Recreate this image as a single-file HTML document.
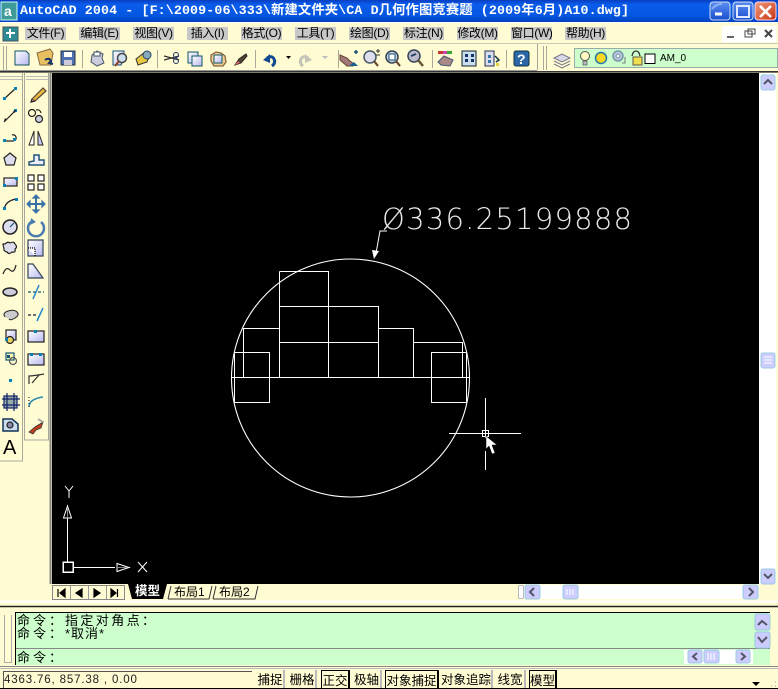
<!DOCTYPE html>
<html><head><meta charset="utf-8">
<style>
html,body{margin:0;padding:0;background:#FFFBD2;}
#r{position:relative;width:778px;height:689px;overflow:hidden;background:#FFFBD2;font-family:"Liberation Sans","Noto Sans CJK SC",sans-serif;}
.a{position:absolute;white-space:pre;}
.m{position:absolute;top:27px;height:13px;width:41px;background:#C8C8C8;font-size:12px;letter-spacing:-.35px;line-height:13px;color:#000;text-align:center;white-space:pre;overflow:hidden;}
.c{position:absolute;font-size:13px;line-height:13px;color:#000;white-space:pre;}
.s{position:absolute;top:670px;height:18px;font-size:12.5px;line-height:20px;text-align:center;color:#000;background:#FFFBD2;border-right:2px solid #bbb;box-sizing:border-box;white-space:pre;overflow:hidden;}
.p{border:1px solid #000;border-bottom:none;border-right:2px solid #000;}
svg{position:absolute;left:0;top:0;}
</style></head><body><div id="r">
<div class="a" style="left:0;top:0;width:778px;height:22px;background:linear-gradient(#0A3FC0,#0A5CEC 20%,#0457E0 70%,#0340C0)"></div>
<div class="a" style="left:20px;top:3px;font-family:'Liberation Mono','Noto Sans CJK SC',monospace;font-weight:bold;font-size:13.33px;letter-spacing:.1px;line-height:17px;color:#fff;">AutoCAD 2004 - [F:\2009-06\333\新建文件夹\CA D几何作图竞赛题 (2009年6月)A10.dwg]</div>
<div class="m" style="left:25px">文件(F)</div><div class="m" style="left:79px">编辑(E)</div><div class="m" style="left:133px">视图(V)</div><div class="m" style="left:187px">插入(I)</div><div class="m" style="left:241px">格式(O)</div><div class="m" style="left:295px">工具(T)</div><div class="m" style="left:349px">绘图(D)</div><div class="m" style="left:403px">标注(N)</div><div class="m" style="left:457px">修改(M)</div><div class="m" style="left:511px">窗口(W)</div><div class="m" style="left:565px">帮助(H)</div>
<div class="a" style="left:722px;top:26px;width:54px;height:16px;background:#fff"></div>
<div class="a" style="left:574px;top:48px;width:204px;height:20px;background:#CCFFCC;box-sizing:border-box;border:1px solid #9aa"></div>
<div class="a" style="left:660px;top:52px;font-size:10px;line-height:13px;color:#000">AM_0</div>
<div class="a" style="left:52px;top:73px;width:707px;height:511px;background:#000"></div>
<div class="a" style="left:759px;top:73px;width:17px;height:511px;background:#fff"></div>
<div class="a" style="left:518px;top:585px;width:241px;height:14px;background:#fff"></div>
<div class="a" style="left:15px;top:612px;width:755px;height:53px;background:#CCFFCC"></div>
<div class="c" style="left:17px;top:614px;letter-spacing:3px">命令：</div><div class="c" style="left:65px;top:614px;letter-spacing:2.4px">指定对角点：</div>
<div class="c" style="left:17px;top:627px;letter-spacing:3px">命令：</div><div class="c" style="left:65px;top:627px;letter-spacing:1px">*取消*</div>
<div class="c" style="left:17px;top:651px;letter-spacing:3px">命令：</div>
<div class="a" style="left:174px;top:585px;font-size:12px;line-height:14px">布局1</div>
<div class="a" style="left:219px;top:585px;font-size:12px;line-height:14px">布局2</div>
<div class="a" style="left:135px;top:584px;font-size:12.5px;line-height:15px;color:#fff;font-weight:bold;z-index:3">模型</div>
<div class="a" style="left:4px;top:674px;font-size:11.500px;line-height:13px;color:#222;letter-spacing:.85px">4363.76, 857.38 , 0.00</div>
<div class="s" style="left:257px;width:28px">捕捉</div><div class="s" style="left:289px;width:28px">栅格</div><div class="s p" style="left:321px;width:29px">正交</div><div class="s" style="left:353px;width:29px">极轴</div><div class="s p" style="left:385px;width:54px">对象捕捉</div><div class="s" style="left:441px;width:52px">对象追踪</div><div class="s" style="left:496px;width:30px">线宽</div><div class="s p" style="left:529px;width:28px">模型</div>
<svg width="778" height="689" viewBox="0 0 778 689" style="z-index:2">
<defs>
<linearGradient id="g" x1="0" y1="0" x2="1" y2="1"><stop offset="0" stop-color="#fff"/><stop offset="1" stop-color="#B8B8F0"/></linearGradient>
<linearGradient id="b" x1="0" y1="0" x2="0" y2="1"><stop offset="0" stop-color="#5C8EF0"/><stop offset="1" stop-color="#1B4FD0"/></linearGradient>
<linearGradient id="x" x1="0" y1="0" x2="1" y2="1"><stop offset="0" stop-color="#F0A080"/><stop offset="1" stop-color="#C83010"/></linearGradient>
</defs>
<!-- title -->
<rect x="1" y="2" width="16" height="18" fill="#3F9A9A" stroke="#CFE" stroke-width="1"/>
<text x="4" y="16" font-family="Liberation Sans" font-size="14" font-weight="bold" fill="#fff">a</text>
<rect x="710" y="2" width="20" height="18" rx="3" fill="url(#b)" stroke="#cde"/><path d="M715 14h7" stroke="#fff" stroke-width="3"/><path d="M712 9q4-5 10-5" stroke="#8fb0f5" stroke-width="2" fill="none"/>
<rect x="733" y="2" width="20" height="18" rx="3" fill="url(#b)" stroke="#cde"/><rect x="737" y="6" width="12" height="11" fill="none" stroke="#dfe8ff" stroke-width="2"/>
<rect x="755" y="2" width="21" height="18" rx="3" fill="url(#x)" stroke="#fde"/><path d="M760 6l11 11M771 6l-11 11" stroke="#fff" stroke-width="2.6"/>
<!-- menu -->
<rect x="3" y="27" width="15" height="14" fill="#2C8C94" stroke="#456"/><path d="M10 29v9M6 33h9" stroke="#fff" stroke-width="2"/><path d="M0 22.5h778" stroke="#fff"/>
<path d="M727 37h7" stroke="#666" stroke-width="2"/><rect x="745" y="31" width="7" height="6" fill="none" stroke="#444"/><rect x="748" y="29" width="7" height="5" fill="none" stroke="#444"/><path d="M765 30l7 7M772 30l-7 7" stroke="#444" stroke-width="2"/>
<path d="M0 43.5h778" stroke="#C8C8B8" stroke-width="1"/>
<!-- toolbar -->
<g stroke="#aaa89a" fill="none"><path d="M3.500 46v24M6.500 46v24M82.500 50v18M157.500 50v18M255.500 50v18M338.500 50v18M432.500 50v18M506.500 50v18M537.500 44v26M543.500 46v24M546.500 46v24"/></g>
<path d="M0 70.500h537" stroke="#999"/><path d="M0 71.800h778" stroke="#333" stroke-width="1.600"/>
<path d="M15 51h11l3 3v11H15z" fill="url(#g)" stroke="#156"/>
<path d="M37 53l13-4 3 4-2 12H40z" fill="#E8C060" stroke="#864"/><path d="M45 60q4-3 6 1l-2 2 4 1" stroke="#136" stroke-width="2" fill="none"/>
<rect x="61" y="51" width="14" height="14" fill="#5070B0" stroke="#234"/><rect x="64" y="52" width="8" height="5" fill="#fff"/><rect x="64" y="60" width="8" height="5" fill="#ccd"/>
<path d="M92 55l5-4 6 3-1 4 2 5-7 3-6-4z" fill="#ccd" stroke="#456"/><rect x="94" y="52" width="6" height="4" fill="#fff" stroke="#456"/>
<path d="M113 51h11v8l-3 6h-8z" fill="url(#g)" stroke="#157"/><circle cx="122" cy="58" r="4.500" fill="#cde" stroke="#444" stroke-width="1.500"/><path d="M119 61l-4 5" stroke="#842" stroke-width="2"/>
<path d="M136 59l9-7 5 3-3 7-9 3z" fill="#E8C840" stroke="#333"/><circle cx="147" cy="55" r="4" fill="#8ab" stroke="#246"/>
<path d="M164 56l15 4M164 60l15-4" stroke="#333" stroke-width="1.200"/><circle cx="176" cy="55" r="2.500" fill="none" stroke="#236"/><circle cx="176" cy="61" r="2.500" fill="none" stroke="#236"/>
<rect x="188" y="52" width="10" height="11" fill="url(#g)" stroke="#156"/><rect x="192" y="56" width="10" height="10" fill="url(#g)" stroke="#156"/>
<path d="M211 55l5-3 5 1 4 3 1 6-3 4h-9l-3-5z" fill="#EED090" stroke="#864" stroke-width="1.300"/><rect x="214" y="55" width="8" height="8" fill="url(#g)" stroke="#156"/>
<path d="M235 65l4-6 7-5 1 2-6 7z" fill="#543" stroke="#222"/><path d="M235 65l3-4 2 2z" fill="#d66"/>
<path d="M272 66q4-3 2-7t-7-1" stroke="#124A90" stroke-width="3" fill="none"/><path d="M263 60l7-6v9z" fill="#124A90"/>
<path d="M286 56h5l-2.500 3z" fill="#000"/>
<path d="M303 66q-4-3-2-7t7-1" stroke="#c4c4b8" stroke-width="3" fill="none"/><path d="M312 60l-7-6v9z" fill="#c4c4b8"/>
<path d="M322 56h6l-3 3z" fill="#bbb"/>
<path d="M340 55l7 3 3 3 4 3-1 2h-6l-7-6z" fill="#A07878" stroke="#643"/><path d="M354 52h4M356 50v4" stroke="#157" stroke-width="1.500"/><path d="M349 66l5-4 4 4z" fill="#1C6090"/>
<circle cx="370" cy="57" r="6" fill="#DDE" stroke="#456" stroke-width="1.500"/><path d="M374 61l4 5" stroke="#643" stroke-width="2.200"/><path d="M376 51h4M378 49v4M376 55h4" stroke="#333"/>
<circle cx="392" cy="57" r="6" fill="#ccd" stroke="#345" stroke-width="1.500"/><path d="M396 61l4 5" stroke="#643" stroke-width="2.200"/><rect x="389" y="54" width="6" height="6" fill="#fff" stroke="#157"/>
<circle cx="414" cy="56" r="6" fill="#bbc" stroke="#345" stroke-width="1.500"/><path d="M418 60l5 6" stroke="#653" stroke-width="2.500"/><path d="M411 56l5-2" stroke="#246" stroke-width="2"/>
<path d="M438 51h14v3h-14z" fill="#c4a"/><path d="M438 51h5v3h-5z" fill="#c33"/><path d="M447 51h5v3h-5z" fill="#3a3"/><path d="M438 62l6-6 9 4-3 6-9-1z" fill="#a88" stroke="#457"/>
<rect x="462" y="51" width="14" height="15" fill="#cde" stroke="#123"/><path d="M465 54h3v3h-3zM471 54h3v3h-3zM465 59h3v3h-3zM471 59h3v3h-3z" fill="#136"/>
<path d="M485 51h9v15h-9z" fill="#DDE" stroke="#235"/><path d="M488 55h3v3h-3zM488 60h3v3h-3z" fill="#37a"/><path d="M495 56l4 4-3 2M498 63v3" stroke="#134" stroke-width="1.500" fill="none"/><rect x="496" y="63" width="3" height="3" fill="#E8D040"/>
<rect x="514" y="51" width="15" height="15" rx="2" fill="#2C68A8" stroke="#134"/><text x="517" y="64" font-family="Liberation Sans" font-size="14" font-weight="bold" fill="#fff">?</text>
<path d="M554 58l8-4 8 4-8 4z" fill="#D8D8E8" stroke="#778"/><path d="M554 61l8 4 8-4M554 64l8 4 8-4" stroke="#778" fill="none"/>
<circle cx="585" cy="56" r="4.500" fill="#FFF8C0" stroke="#555"/><path d="M583 61h4v4h-4z" fill="#bbb" stroke="#555" stroke-width=".7"/>
<circle cx="601" cy="58" r="5.500" fill="#F8D820" stroke="#27A" stroke-width="1.500"/>
<circle cx="618" cy="56" r="5" fill="#BBC8E0" stroke="#79A" stroke-width="1.500"/><circle cx="618" cy="56" r="2" fill="#EEE" stroke="#79A"/><path d="M622 63h3v-6" stroke="#777" fill="none"/>
<path d="M632 56q1-5 4-5t4 5" stroke="#333" stroke-width="1.300" fill="none"/><rect x="633" y="57" width="9" height="8" fill="#F0E050" stroke="#654"/>
<rect x="645" y="54" width="10" height="9.500" fill="#fff" stroke="#000"/>
<!-- left toolbars frame -->
<path d="M22.500 73V461H0M24.500 73V440H48.500V73" stroke="#A8A89C" fill="none"/><path d="M50.500 73V584" stroke="#888" stroke-width="2"/><path d="M0 76.500h22M0 79.500h22M26 76.500h22M26 79.500h22" stroke="#bbb"/>
<g stroke="#222" stroke-width="1.200" fill="none">
<path d="M4 99L16 88"/>
<path d="M4 122L16 110"/>
<path d="M4 141H13q4-1 3-4t-4-2"/>
<path d="M10 153l6 5-2 7H6l-2-7z" fill="#DDE"/>
<rect x="4" y="178" width="13" height="8" fill="url(#g)"/>
<path d="M4 210q1-9 12-11"/>
<circle cx="10" cy="227" r="7" fill="#DDE" stroke-width="1.500"/><path d="M10 227l4-4" stroke="#157"/>
<path d="M5 244q3-3 5-1 4-2 5 1 3 3 0 5 1 4-3 3-3 3-5 0-4-1-3-4-1-2-1-4z" fill="#DDE"/>
<path d="M3 274q3-8 7-4t6-5"/>
<ellipse cx="10" cy="292" rx="7" ry="4" fill="#CCD" stroke-width="1.500"/>
<path d="M5 317q-3-4 3-6t9 1-2 6-6 1" fill="#CCC" stroke-width="1"/>
<rect x="6" y="330" width="10" height="10" fill="url(#g)"/><circle cx="10" cy="340" r="3.500" fill="#E8D060"/>
<rect x="6" y="353" width="8" height="7" fill="#FFF8B0" stroke="#157"/><circle cx="13" cy="361" r="3.500" stroke="#555"/>
<rect x="4" y="396" width="13" height="12" fill="#9AA" stroke="#126"/><path d="M2 399h18M2 405h18M7 393v18M14 393v18" stroke="#126"/>
<path d="M3 419h9l6 5v7H3z" fill="#CDE" stroke="#135" stroke-width="1.500"/><circle cx="10" cy="425" r="3" fill="#88A"/>
<path d="M32 99l11-11 3 3-11 10z" fill="#E8B840" stroke="#543"/><path d="M32 99l-1 3 4-1" fill="#E88"/>
<circle cx="32" cy="113" r="3.500"/><circle cx="39" cy="119" r="3.500" fill="#CCD"/><path d="M36 110q4-1 5 3"/>
<path d="M29 145l5-14v14z" fill="#fff" stroke-width="1"/><path d="M43 145l-5-14v14z" fill="#C8C8F8" stroke-width="1"/>
<path d="M29 165v-3l5-1v-6h5v5h5v5z" fill="#EEF" stroke="#257" stroke-width="1.500"/>
<rect x="28" y="175" width="6" height="6" fill="#fff"/><rect x="38" y="175" width="6" height="6" fill="#fff"/><rect x="28" y="184" width="6" height="6" fill="#fff"/><rect x="38" y="184" width="6" height="6" fill="#fff"/>
<path d="M36 196v16M28 204h16" stroke="#3A70A8" stroke-width="2"/><path d="M36 195l-3 3h6zM36 213l-3-3h6zM27 204l3-3v6zM45 204l-3-3v6z" fill="#3A70A8" stroke="#3A70A8"/>
<path d="M31 222a8 8 0 1 0 10 0" stroke="#4A7CB0" stroke-width="2.500"/><path d="M31 218l5 4-6 3z" fill="#4A7CB0" stroke="none"/>
<path d="M28 240h15v16H28z" fill="url(#g)" stroke="#345"/><path d="M28 248h7v8" stroke="#000" stroke-dasharray="1 1" fill="#fff"/>
<path d="M28 278v-14h5l10 14z" fill="url(#g)" stroke="#345"/>
<path d="M28 292h16" stroke="#157" stroke-dasharray="3 2"/><path d="M33 299l6-14" stroke="#28C" stroke-width="1.500"/>
<path d="M28 315h8" stroke="#123" stroke-dasharray="3 2"/><path d="M37 321l6-13" stroke="#28C" stroke-width="1.500"/>
<rect x="28" y="331" width="16" height="11" fill="url(#g)"/><rect x="28" y="354" width="16" height="11" fill="url(#g)"/>
<path d="M29 384v-8q3 0 15-2M32 383l7-8" stroke="#333"/>
<path d="M29 407q0-8 14-10" stroke="#28A" stroke-width="1.500"/><path d="M29 407v-10h2" stroke="#333" stroke-dasharray="1 2"/>
</g>
<g fill="#0880B8"><rect x="3" y="97" width="3" height="3"/><rect x="14" y="87" width="3" height="3"/><rect x="14" y="109" width="3" height="3"/><rect x="3" y="139" width="3" height="3"/><rect x="13" y="138" width="3" height="3"/><rect x="3" y="184" width="3" height="3"/><rect x="15" y="177" width="3" height="3"/><rect x="3" y="207" width="3" height="3"/><rect x="15" y="198" width="3" height="3"/><rect x="9" y="379" width="3" height="3"/><rect x="5" y="338" width="3" height="3"/><rect x="34" y="330" width="3" height="3"/><rect x="30" y="353" width="3" height="3"/><rect x="39" y="353" width="3" height="3"/></g>
<path d="M4 121l3-1-2-2zM16 110l-3 1 2 2z" fill="#222"/><path d="M7 355h3v3H7z" fill="#157"/>
<path d="M29 432l6-5 5-3 3-2-2 6-5 2-3 4z" fill="#C04020" stroke="#333" stroke-width=".8"/><path d="M38 419l5 3" stroke="#aaa" stroke-width="2"/>
<text x="3" y="454" font-family="Liberation Sans" font-size="20" fill="#000">A</text>
<!-- right scrollbar -->
<rect x="761" y="75" width="14" height="15" rx="2" fill="#CCCCFF" stroke="#9cd"/><path d="M764 84l4-4 4 4" stroke="#556" stroke-width="2" fill="none"/>
<rect x="761" y="353" width="14" height="15" rx="2" fill="#CCCCFF" stroke="#9cd"/><path d="M764 357h8M764 360h8M764 363h8" stroke="#fff"/>
<rect x="761" y="569" width="14" height="15" rx="2" fill="#CCCCFF" stroke="#9cd"/><path d="M764 574l4 4 4-4" stroke="#556" stroke-width="2" fill="none"/>
<!-- drawing -->
<g stroke="#fff" fill="none" stroke-width="1" shape-rendering="crispEdges">
<path d="M279.500 271.500H328.500V377.500M279.500 271.500V377.500M279.500 306.500H378.500V377.500M279.500 342.500H378.500M378.500 328.500H413.500V377.500M413.500 342.500H462.500V377.500M243.500 377.500V328.500H279.500M231 377.500H470M234.500 352.500H269.500V402.500H234.500ZM431.500 352.500H466.500V402.500H431.500Z"/>
<path d="M449 433.500H521M485.500 398V438M485.500 451V470"/>
<rect x="482.500" y="430.500" width="6" height="6"/>
<path d="M67.500 505V562M73 567.500H115M122 567.500h8"/>
<rect x="63" y="562" width="10" height="10" stroke-width="1.500"/>
</g>
<circle cx="350.500" cy="378" r="119" fill="none" stroke="#fff" stroke-width="1.100"/>
<path d="M387 231H380L375.500 256" stroke="#fff" fill="none"/><path d="M374 259l-2-9 7 1z" fill="#fff"/>
<path d="M486 436v13l3-3 3 8 3-1-3-8h5z" fill="#fff" stroke="#000" stroke-width=".5"/>
<path d="M67.500 506l-4 12h8zM129 567.500l-12-4v8z" fill="#000" stroke="#fff"/><path d="M67.500 508v9M127 567.500h-9" stroke="#888"/>
<path d="M65 486l4 5 4-5M69 491v7M138 562l9 10M147 562l-9 10" stroke="#fff" fill="none"/>
<text x="382" y="229" font-family="'DejaVu Sans','Liberation Sans',sans-serif" font-weight="200" font-size="29" fill="#e8e8e8" textLength="250" lengthAdjust="spacing">Ø336.25199888</text>
<!-- tabs -->
<rect x="52.500" y="585.500" width="72" height="14" fill="#FFFBD2" stroke="#888"/><path d="M70.500 586v13M88.500 586v13M106.500 586v13" stroke="#999"/>
<path d="M58 589v8M60 593l5-4v8zM76 593l6-4v8zM94 589l6 4-6 4zM111 589l5 4-5 4zM117.500 589v8" stroke="#000" fill="#000" stroke-width="1.200"/>
<path d="M128 584l4 15h31l4-15z" fill="#000"/>
<path d="M168 599l3-13M212 586l-3 13H168M213 599l3-13M258 586l-3 13H213" stroke="#333" fill="none"/>
<rect x="518.500" y="585.500" width="5" height="13" rx="1" fill="#fff" stroke="#bbb"/>
<rect x="525" y="585" width="15" height="14" rx="2" fill="#CCCCFF" stroke="#9cd"/><path d="M534 588l-4 4 4 4" stroke="#556" stroke-width="2" fill="none"/>
<rect x="563" y="585" width="15" height="14" rx="2" fill="#CCCCFF" stroke="#9cd"/><path d="M567 589v6M570 589v6M573 589v6" stroke="#fff"/>
<rect x="743" y="585" width="15" height="14" rx="2" fill="#CCCCFF" stroke="#9cd"/><path d="M749 588l4 4-4 4" stroke="#556" stroke-width="2" fill="none"/>
<!-- command -->
<path d="M0 601.500h778" stroke="#fff" stroke-width="2"/><path d="M0 606.500h778" stroke="#222" stroke-width="1.500"/>
<path d="M15.500 665V612.500H770" stroke="#000" fill="none"/><path d="M16 648.500h754" stroke="#888"/>
<path d="M4.500 615v47M11.500 615v47M4 662.500h8" stroke="#aaa" fill="none"/>
<rect x="755" y="614" width="15" height="16" rx="2" fill="#CCCCFF" stroke="#9cd"/><path d="M758 625l4-4 5 4" stroke="#556" stroke-width="2" fill="none"/>
<rect x="755" y="632" width="15" height="16" rx="2" fill="#CCCCFF" stroke="#9cd"/><path d="M758 637l4 5 5-5" stroke="#556" stroke-width="2" fill="none"/>
<rect x="684" y="650" width="69" height="14" fill="#fff"/>
<rect x="688" y="650" width="14" height="13" rx="2" fill="#CCCCFF" stroke="#9cd"/><path d="M697 653l-4 3.500 4 3.500" stroke="#556" stroke-width="2" fill="none"/>
<rect x="704" y="650" width="15" height="13" rx="2" fill="#CCCCFF" stroke="#9cd"/><path d="M708 653v7M711 653v7M714 653v7" stroke="#fff"/>
<rect x="736" y="650" width="14" height="13" rx="2" fill="#CCCCFF" stroke="#9cd"/><path d="M741 653l4 3.500-4 3.500" stroke="#556" stroke-width="2" fill="none"/>
<path d="M0 666.500h778" stroke="#888"/><path d="M0 668.500h778" stroke="#bbb"/>
<path d="M0 688.500h778" stroke="#000"/><path d="M3.500 688V671.500H252" stroke="#555" fill="none"/>
<path d="M752 682h8l-4 4z" fill="#000"/><path d="M771 686h1M775 686h1M775 682h1" stroke="#aaa"/>
</svg>
</div></body></html>
